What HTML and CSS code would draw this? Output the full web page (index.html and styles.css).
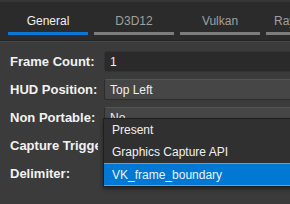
FILE: index.html
```html
<!DOCTYPE html>
<html>
<head>
<meta charset="utf-8">
<link rel="stylesheet" href="styles.css">
</head>
<body>
<div class="app">
  <div class="tabs">
    <div class="tab active">General</div>
    <div class="tab">D3D12</div>
    <div class="tab">Vulkan</div>
    <div class="tab">Ray Tracing</div>
  </div>
  <div class="content">
    <div class="row">
      <div class="label">Frame Count:</div>
      <div class="field input">1</div>
    </div>
    <div class="row">
      <div class="label">HUD Position:</div>
      <div class="field select">Top Left</div>
    </div>
    <div class="row">
      <div class="label">Non Portable:</div>
      <div class="field select">No</div>
    </div>
    <div class="row">
      <div class="label">Capture Trigger:</div>
      <div class="field select"></div>
    </div>
    <div class="row">
      <div class="label">Delimiter:</div>
      <div class="field select"></div>
    </div>
    <div class="popup">
      <div class="item">Present</div>
      <div class="item">Graphics Capture API</div>
      <div class="item selected">VK_frame_boundary</div>
    </div>
  </div>
</div>
</body>
</html>
```

FILE: styles.css
```css
html, body {
  margin: 0;
  padding: 0;
  background: #3b3b3b;
  overflow: hidden;
}
.app {
  width: 290px;
  height: 204px;
  font-family: "Liberation Sans", Arial, sans-serif;
  overflow: hidden;
  position: relative;
}
.tabs {
  height: 38px;
  border-top: 2px solid #363636;
  background: #2b2b2b;
  border-bottom: 1px solid #242424;
  box-shadow: 0 1px 0 #474747;
  display: flex;
  gap: 6px;
  padding-left: 8px;
  white-space: nowrap;
  position: relative;
  z-index: 1;
}
.tab {
  flex: 0 0 80px;
  box-sizing: content-box;
  font-size: 12px;
  line-height: 12px;
  display: flex;
  align-items: center;
  justify-content: center;
  padding-top: 8px;
  height: 22px;
  border-bottom: 3px solid #7c7c7c;
  color: #a0a0a0;
}
.tab.active {
  color: #f0f0f0;
  border-bottom-color: #0a78d4;
}
.content {
  position: relative;
  padding-top: 10px;
  display: flex;
  flex-direction: column;
  gap: 7px;
  height: 200px;
}
.row {
  display: flex;
  align-items: center;
  gap: 6px;
  height: 21px;
}
.label {
  flex: 0 0 88px;
  margin-left: 10px;
  font-size: 13px;
  font-weight: bold;
  color: #f2f2f2;
  white-space: nowrap;
  overflow: hidden;
}
.field {
  flex: 0 0 220px;
  height: 21px;
  box-sizing: border-box;
  border-radius: 3px;
  font-size: 12px;
  color: #f0f0f0;
  padding-left: 5px;
  display: flex;
  align-items: center;
}
.input {
  background: #2a2a2a;
  border: 1px solid #333333;
}
.select {
  background: #464646;
  border: 1px solid #2c2c2c;
  border-top-color: #555555;
}
.popup {
  position: absolute;
  left: 103px;
  top: 77px;
  width: 220px;
  background: #303030;
  border: 1px solid #1f1f1f;
  box-shadow: 0 2px 4px rgba(0,0,0,0.45);
  font-size: 12px;
  color: #f0f0f0;
}
.item {
  height: 22px;
  box-sizing: border-box;
  padding-left: 8px;
  display: flex;
  align-items: center;
  white-space: nowrap;
}
.item.selected {
  height: 23px;
  background: #0078d4;
  border-top: 1px solid #4aa6ee;
  border-bottom: 1px solid #4aa6ee;
}
```
